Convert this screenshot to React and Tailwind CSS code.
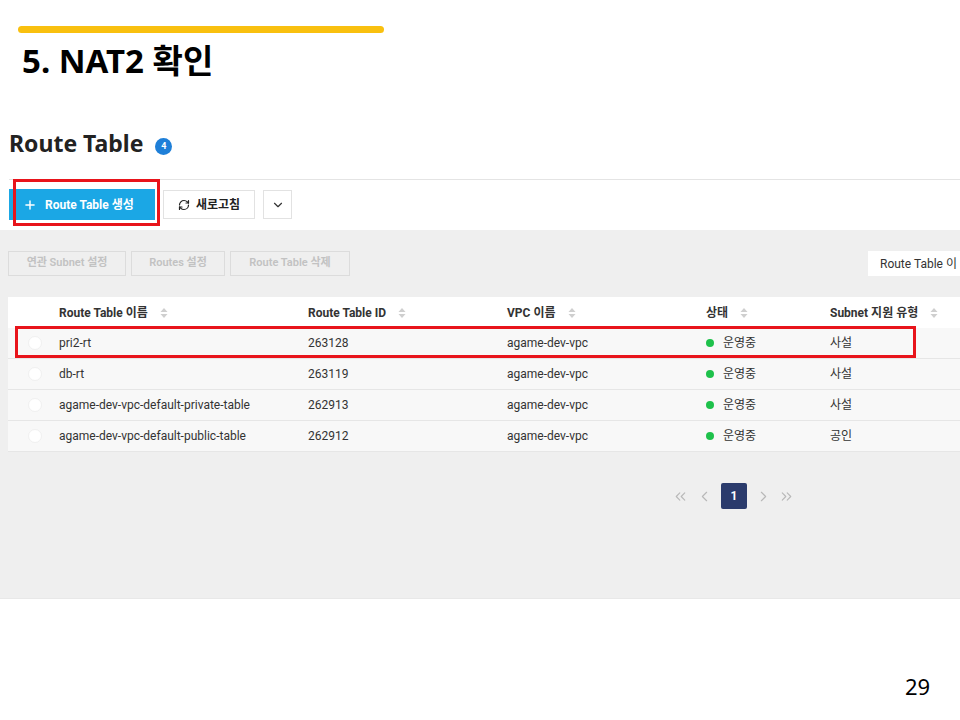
import { RefreshCw, ChevronDown, Plus, ChevronLeft, ChevronRight, ChevronsLeft, ChevronsRight } from "lucide-react";

const rows = [
  { name: "pri2-rt", id: "263128", vpc: "agame-dev-vpc", type: "사설" },
  { name: "db-rt", id: "263119", vpc: "agame-dev-vpc", type: "사설" },
  { name: "agame-dev-vpc-default-private-table", id: "262913", vpc: "agame-dev-vpc", type: "사설" },
  { name: "agame-dev-vpc-default-public-table", id: "262912", vpc: "agame-dev-vpc", type: "공인" },
];

const cols = "grid grid-cols-[51px_249px_199px_199px_124px_1fr]";

function SortIcon() {
  return (
    <svg width="8" height="12" viewBox="0 0 8 12" className="ml-[12px]">
      <path d="M4 1 L7.5 5 H0.5 Z" fill="#cfcfcf" />
      <path d="M4 11 L7.5 7 H0.5 Z" fill="#cfcfcf" />
    </svg>
  );
}

function HeadCell({ children }) {
  return (
    <div className="flex items-center">
      <span>{children}</span>
      <SortIcon />
    </div>
  );
}

export default function App() {
  return (
    <div
      className="relative w-[960px] h-[720px] bg-white overflow-hidden"
      style={{ fontFamily: "Roboto, 'Noto Sans CJK KR', sans-serif" }}
    >
      <div className="ml-[18px] mt-[26px] w-[366px] h-[7px] rounded-full bg-[#f9c00f]" />
      <h1
        className="ml-[22px] mt-[6px] text-[33px] leading-[44px] font-bold text-black"
        style={{ fontFamily: "'Noto Sans', 'Noto Sans CJK KR', sans-serif" }}
      >
        5. NAT2 확인
      </h1>

      {/* screenshot */}
      <div className="mt-[43px] relative">
        <div className="h-[53px] flex items-start pl-[9px]">
          <span
            className="text-[23px] leading-[34px] font-bold text-[#222]"
            style={{ fontFamily: "'Noto Sans', 'Noto Sans CJK KR', sans-serif" }}
          >
            Route Table
          </span>
          <span className="ml-[12px] mt-[12px] w-[17px] h-[17px] rounded-full bg-[#1e7fd8] text-white text-[9px] font-bold flex items-center justify-center">
            4
          </span>
        </div>
        <div className="ml-[9px] h-px bg-[#e4e4e4]" />
        <div className="flex items-center gap-[8px] pl-[9px] pt-[9px] pb-[10px]">
          <button className="h-[31px] w-[146px] bg-[#1ba7e5] text-white text-[12px] font-bold flex items-center pl-[14px] gap-[8px]">
            <Plus size={14} strokeWidth={2.5} />
            Route Table 생성
          </button>
          <button className="h-[29px] w-[92px] bg-white border border-[#e2e2e2] text-[#222] text-[12px] font-bold flex items-center justify-center gap-[6px]">
            <RefreshCw size={12} strokeWidth={2.4} />
            새로고침
          </button>
          <button className="h-[29px] w-[29px] bg-white border border-[#e2e2e2] text-[#333] flex items-center justify-center">
            <ChevronDown size={14} strokeWidth={2} />
          </button>
        </div>

        <div className="bg-[#efefef] h-[369px] pt-[21px] border-b border-[#e8e8e8]">
          <div className="flex items-center pl-[8px] gap-[5px]">
            {["연관 Subnet 설정", "Routes 설정", "Route Table 삭제"].map((t, i) => (
              <button
                key={t}
                className={`h-[25px] border border-[#dcdcdc] bg-[#efefef] text-[#c2c2c2] text-[11px] font-semibold flex items-center justify-center ${
                  i === 0 ? "w-[118px]" : i === 1 ? "w-[94px]" : "w-[120px]"
                }`}
              >
                {t}
              </button>
            ))}
            <div className="ml-auto h-[25px] w-[92px] bg-white pl-[12px] flex items-center text-[12px] text-[#333] whitespace-nowrap overflow-hidden">
              Route Table 이
            </div>
          </div>

          <div className="ml-[8px] mt-[21px] text-[12px] text-[#333]">
            <div className={`${cols} h-[31px] items-center bg-white font-bold text-[#333]`}>
              <div />
              <HeadCell>Route Table 이름</HeadCell>
              <HeadCell>Route Table ID</HeadCell>
              <HeadCell>VPC 이름</HeadCell>
              <HeadCell>상태</HeadCell>
              <HeadCell>Subnet 지원 유형</HeadCell>
            </div>
            {rows.map((r) => (
              <div key={r.id} className={`${cols} h-[31px] items-center bg-[#f8f8f8] border-b border-[#e6e6e6]`}>
                <div className="flex pl-[20px]">
                  <span className="w-[14px] h-[14px] rounded-full bg-white border border-[#f0f0f0]" />
                </div>
                <div>{r.name}</div>
                <div>{r.id}</div>
                <div>{r.vpc}</div>
                <div className="flex items-center">
                  <span className="w-[8px] h-[8px] rounded-full bg-[#1ec14b] mr-[9px]" />
                  운영중
                </div>
                <div>{r.type}</div>
              </div>
            ))}
          </div>

          <div className="flex items-center mt-[31px] ml-[672px] text-[#b8b8b8]">
            <ChevronsLeft size={17} strokeWidth={1.6} />
            <ChevronLeft size={17} strokeWidth={1.6} className="ml-[7px]" />
            <span className="ml-[8px] w-[26px] h-[26px] rounded-[2px] bg-[#2b3b6c] text-white text-[12px] font-bold flex items-center justify-center">
              1
            </span>
            <ChevronRight size={17} strokeWidth={1.6} className="ml-[8px]" />
            <ChevronsRight size={17} strokeWidth={1.6} className="ml-[6px]" />
          </div>
        </div>

        {/* annotation boxes */}
        <div className="absolute left-[13px] top-[53px] w-[147px] h-[47px] border-[3px] border-[#e8141b]" />
        <div className="absolute left-[15px] top-[200px] w-[901px] h-[32px] border-[3px] border-[#e8141b]" />
      </div>

      <div
        className="absolute left-[905px] top-[670px] text-[22px] text-black"
        style={{ fontFamily: "'Noto Sans', sans-serif" }}
      >
        29
      </div>
    </div>
  );
}
